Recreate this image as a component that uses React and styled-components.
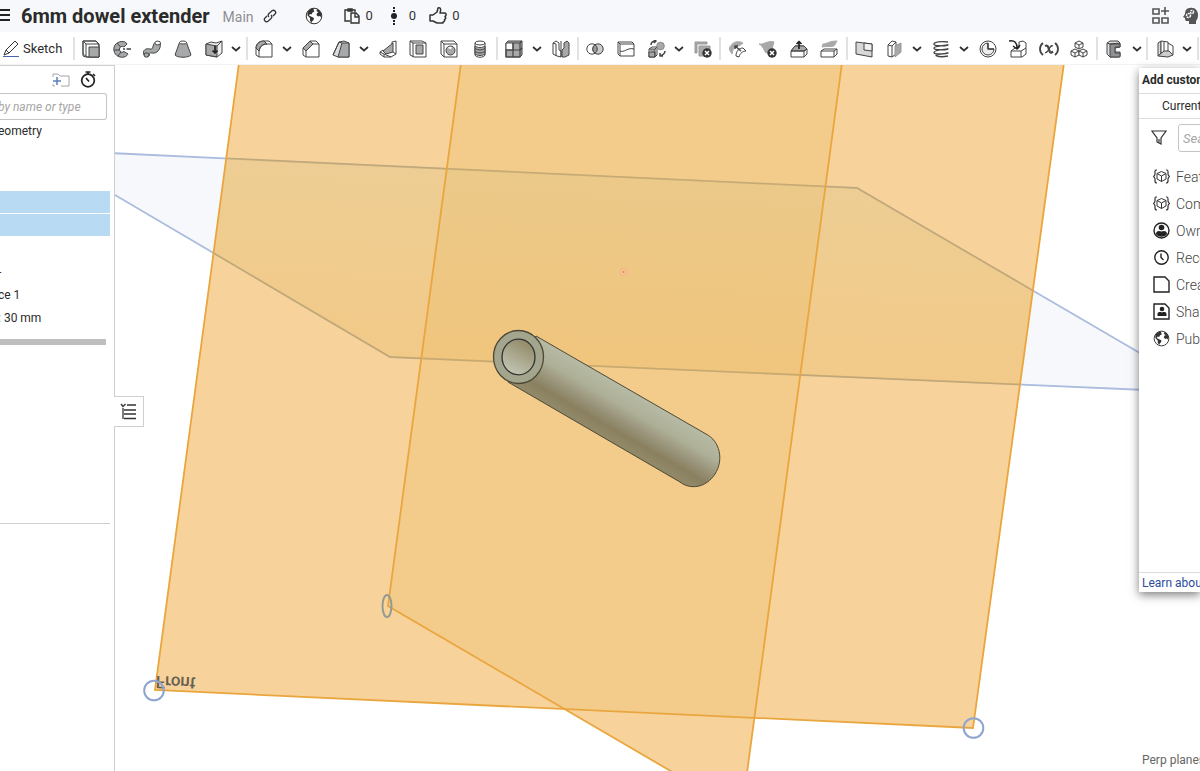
import React from "react";
import styled, { createGlobalStyle } from "styled-components";

const Global = createGlobalStyle`
  *, *::before, *::after { box-sizing: border-box; }
  body {
    margin: 0;
    background: #fff;
    color: #2b2b2b;
    font: 12px/16px Roboto, "Liberation Sans", sans-serif;
    overflow: hidden;
  }
  button, input { font: inherit; color: inherit; }
  svg { flex: none; }
`;

const Page = styled.div`
  display: flex;
  flex-direction: column;
  height: 100vh;
  overflow: hidden;
`;

const Header = styled.header`
  display: flex;
  align-items: center;
  flex: none;
  height: 32px;
  background: #f7f8fb;
`;

const PlainButton = styled.button`
  display: flex;
  align-items: center;
  justify-content: center;
  flex: none;
  padding: 0;
  border: 0;
  background: none;
  cursor: pointer;
`;

const MenuButton = styled(PlainButton)`
  width: 10px;
  margin-right: 11px;
`;

const Title = styled.h1`
  margin: 0;
  font-size: 20px;
  line-height: 30px;
  font-weight: 700;
  white-space: nowrap;
`;

const Branch = styled.span`
  margin: 2px 9px 0 13px;
  font-size: 14px;
  color: #8d8f93;
`;

const Stats = styled.div`
  display: flex;
  align-items: center;
  gap: 17px;
  margin-left: 28px;
`;

const Stat = styled(PlainButton)`
  gap: ${(p) => p.$gap || 6}px;
  margin-left: ${(p) => p.$before || 0}px;
  font-size: 13px;
  color: #333;
`;

const HeaderEnd = styled.div`
  display: flex;
  align-items: center;
  gap: 12px;
  margin-left: auto;
`;

const Toolbar = styled.div`
  display: flex;
  align-items: center;
  flex: none;
  height: 33px;
  border-bottom: 1px solid #f3f3f3;
  background: #fff;
`;

const SketchButton = styled(PlainButton)`
  justify-content: flex-start;
  width: 72px;
  height: 32px;
  gap: 3px;
  padding: 1px 0 0 3px;
  font-size: 13px;
`;

const Tool = styled(PlainButton)`
  flex: 0 1 31px;
  min-width: 0;
  height: 32px;
  padding-top: 1px;
`;

const Arrow = styled(PlainButton)`
  width: 16px;
  height: 32px;
  padding: 1px 1px 0 0;
`;

const Divider = styled.span`
  flex: none;
  width: 2px;
  height: 23px;
  margin: 0 1px;
  background: #e2e2e2;
`;

const Main = styled.main`
  position: relative;
  display: flex;
  flex: 1;
  min-height: 0;
`;

const Side = styled.aside`
  flex: none;
  width: 115px;
  border-top: 1px solid #cfcfcf;
  border-right: 1px solid #cfcfcf;
  background: #fff;
`;

const SideTools = styled.div`
  display: flex;
  align-items: center;
  justify-content: flex-end;
  gap: 10px;
  height: 27px;
  padding-right: 18px;
`;

const FilterInput = styled.input`
  display: block;
  width: 107px;
  height: 27px;
  padding: 0;
  border: 1px solid #c4c4c4;
  border-left: 0;
  border-radius: 0 3px 3px 0;
  outline: 0;
  background: #fff;
  text-indent: -2px;
  &::placeholder { color: #a6a6a6; font-style: italic; opacity: 1; }
`;

const List = styled.ul`
  display: flex;
  flex-direction: column;
  gap: 1px;
  margin: ${(p) => p.$top || 0}px 0 0;
  padding: 0;
  list-style: none;
`;

const Row = styled.li`
  height: 22px;
  width: 110px;
  line-height: 23px;
  text-indent: -2px;
  white-space: nowrap;
  overflow: hidden;
  background: ${(p) => (p.$selected ? "#b8daf2" : "transparent")};
`;

const SplitBar = styled.div`
  width: 106px;
  height: 6px;
  margin-top: 10px;
  background: #bfbfbf;
`;

const Rule = styled.hr`
  width: 110px;
  height: 1px;
  margin: 178px 0 0;
  border: 0;
  background: #cfcfcf;
`;

const Viewport = styled.section`
  position: relative;
  flex: 1;
  min-width: 0;
  overflow: hidden;
`;

const Scene = styled.svg`
  display: block;
  width: 100%;
  height: 100%;
`;

const ListTab = styled(PlainButton)`
  position: absolute;
  left: 114px;
  top: 331px;
  width: 30px;
  height: 31px;
  border: 1px solid #cfcfcf;
  border-left: 0;
  background: #fff;
`;

const Dialog = styled.aside`
  position: absolute;
  top: 3px;
  right: 0;
  display: flex;
  flex-direction: column;
  width: 61px;
  min-height: 524px;
  background: #fff;
  box-shadow: 0 3px 9px rgba(0, 0, 0, 0.5);
  overflow: hidden;
  white-space: nowrap;
`;

const DialogTitle = styled.h2`
  margin: 0;
  padding-left: 3px;
  height: 26px;
  font-size: 12px;
  line-height: 24px;
  font-weight: 700;
  border-bottom: 1px solid #dcdcdc;
`;

const DialogTab = styled(PlainButton)`
  justify-content: flex-start;
  height: 25px;
  padding-left: 23px;
  border-bottom: 1px solid #dcdcdc;
`;

const SearchLine = styled.div`
  display: flex;
  align-items: center;
  gap: 11px;
  padding: 5px 0 0 12px;
`;

const SearchInput = styled.input`
  flex: none;
  width: 160px;
  height: 28px;
  padding: 0 4px;
  border: 1px solid #c4c4c4;
  border-radius: 3px;
  outline: 0;
  font-size: 13px;
  &::placeholder { color: #a6a6a6; font-style: italic; opacity: 1; }
`;

const Sources = styled.ul`
  flex: 1;
  margin: 11px 0 0;
  padding: 0;
  list-style: none;
`;

const Source = styled(PlainButton)`
  justify-content: flex-start;
  gap: 6px;
  height: 27px;
  padding-left: 14px;
  font-size: 14px;
  font-weight: 300;
  color: #444;
`;

const Learn = styled.a`
  height: 20px;
  padding-left: 3px;
  border-top: 1px solid #dcdcdc;
  font-size: 12px;
  line-height: 20px;
  color: #2c4b9c;
  text-decoration: none;
`;

const Status = styled.output`
  position: absolute;
  right: 0;
  bottom: 3px;
  width: 58px;
  overflow: hidden;
  white-space: nowrap;
  color: #666;
`;

const D = "#444";
const G = "#a6a8aa";

const drawings = {
  extrude: (
    <>
      <path d="M1 4V16L4 17H17V5L14 1H4L1 1Z" fill="#fff" />
      <path d="M1 1H14L17 4V17H5L1 14Z M1 1L4 4H17M4 4V16" />
      <path d="M7 7H17V17H7Z" fill={G} />
    </>
  ),
  revolve: (
    <>
      <path d="M14 4C12 0 5 1 2 5C-1 10 2 16 7 17C11 18 14 16 15 14L11 11.500C9 13 7 12 6.500 10C6 7 9 5.500 11 7Z" fill={G} />
      <path d="M14 4L11 7M4 3L7.500 7M1 10H6M5 16L8 12" />
      <path d="M10 9H12M13.500 9H18" strokeWidth="1.300" />
    </>
  ),
  sweep: (
    <>
      <path d="M1 15C-1 10 3 8 7 9C11 10 9 5 12 2.500L17.300 3.500C18 9 14 14 9 13C6 12 7 14 6 16Z" fill={G} />
      <ellipse cx="14.700" cy="3" rx="2.800" ry="1.900" fill="#fff" />
      <ellipse cx="3.500" cy="15" rx="2.500" ry="2.200" fill={G} />
    </>
  ),
  loft: (
    <>
      <path d="M5.500 2.500L1 15C4 18 14 18 17 15L12.500 2.500Z" fill={G} />
      <ellipse cx="9" cy="2.500" rx="3.500" ry="1.500" fill="#fff" />
    </>
  ),
  thicken: (
    <>
      <path d="M1 4L6 2L11 3L17 1V13L12 17L1 15Z" fill="#eee" />
      <path d="M1 4L12 6V17L1 15Z" fill={G} />
      <path d="M12 6L17 1" />
      <path d="M10 6V13M7.500 10.500L10 13L12.500 10.500" stroke="#222" strokeWidth="1.700" />
    </>
  ),
  fillet: (
    <>
      <path d="M1 15V8C1 3 5 1 9 1H14L17 4V17H4Z" fill="#fff" />
      <path d="M1 8C2 3 5 1 9 1L12 4C7 4 5 7 4 11Z" fill={G} />
      <path d="M4 17V11C5 6 8 4 12 4H17" />
    </>
  ),
  chamfer: (
    <>
      <path d="M1 15V8L8 1H14L17 4V17H4Z" fill="#fff" />
      <path d="M1 8L8 1L11 4L4 11Z" fill={G} />
      <path d="M4 17V11L11 4H17" />
    </>
  ),
  draft: (
    <>
      <path d="M1 15L7 2L12 1L17 3V17H6Z" fill="#ddd" />
      <path d="M6 17L10 3H17V17Z" fill={G} />
      <path d="M1 15L7 2L10 3" />
    </>
  ),
  rib: (
    <>
      <path d="M1 12L4 10L6 13L13 10V2L17 1V14L12 17H5L1 14Z" fill="#fff" />
      <path d="M4 11L14 3V12L7 14Z" fill={G} />
      <path d="M1 12L5 14L12 17M5 14V17M14 12L17 14" />
    </>
  ),
  shell: (
    <>
      <path d="M1 1H13L17 3V17H5L1 15Z" fill="#fff" />
      <path d="M7 5H14V14H7Z" fill={G} />
      <path d="M1 1L4 3V17M4 3H17" />
    </>
  ),
  hole: (
    <>
      <path d="M1 1H14L17 4V17H4L1 14Z" fill="#fff" />
      <path d="M1 1L4 4H17M4 4V17" />
      <circle cx="10.500" cy="10.500" r="4.500" fill={G} />
      <path d="M8 8C9 6.500 11 6.500 12 7.500C11 9.500 10 9.500 8 8Z" fill="#fff" stroke="none" />
    </>
  ),
  thread: (
    <>
      <path d="M4 3V15C5 18 13 18 14 15V3Z" fill="#fff" />
      <path d="M4 6C7 8 11 8 14 6V14C11 16 7 16 4 14Z" fill={G} />
      <ellipse cx="9" cy="3" rx="5" ry="2" fill="#fff" />
      <path d="M4 8.500C7 10.500 11 10.500 14 8.500M4 11.500C7 13.500 11 13.500 14 11.500" />
    </>
  ),
  pattern: (
    <>
      <path d="M1 3L3 1H17V15L15 17H1Z" fill={G} />
      <path d="M1 3H8V10H1Z" fill="#fff" />
      <path d="M8 3H15V10H8ZM1 10H8V17H1ZM8 10H15V17H8ZM15 3L17 1M15 10L17 8" strokeWidth="1.200" />
    </>
  ),
  mirror: (
    <>
      <path d="M1 3L4 1L7 3V10L9 11V17L5 16L1 14Z" fill="#fff" />
      <path d="M10 10L12 8V3L15 1L17 3V15L13 17H10Z" fill={G} />
      <path d="M1 3L4 4V16M9 1V17" />
    </>
  ),
  boolean: (
    <>
      <circle cx="6" cy="9" r="5.200" fill="#fff" />
      <circle cx="12" cy="9" r="5.200" fill="#c8c9ca" />
      <path d="M9 4.700A5.200 5.200 0 0 1 9 13.300A5.200 5.200 0 0 1 9 4.700Z" fill="#999" />
    </>
  ),
  split: (
    <>
      <path d="M1 2H15L17 4V16H3L1 14Z" fill="#fff" />
      <path d="M1 2L3 4H17M3 4V16M3 11C7 13 11 7 17 9" />
    </>
  ),
  transform: (
    <>
      <path d="M1 9L4 7H9V15L7 17H1Z" fill="#fff" />
      <path d="M1 9H7V17M7 9L9 7M1 12H7V17H1Z" fill={G} />
      <circle cx="12.500" cy="6" r="3.800" fill={G} stroke="#888" />
      <path d="M3 5C3 2 5 1 8 1M6 0L8 1L6 3M17 11C17 13 15 15 12 16M12 13V16H15" strokeWidth="1.500" />
    </>
  ),
  deletePart: (
    <>
      <path d="M1 2H13V4H3V13H1Z" fill={G} stroke="#999" />
      <path d="M5 6H16V16H5Z" fill={G} stroke="#999" />
      <circle cx="13" cy="13" r="4.700" fill="#333" stroke="none" />
      <path d="M11 11L15 15M15 11L11 15" stroke="#fff" strokeWidth="1.500" />
    </>
  ),
  modifyFillet: (
    <>
      <path d="M0 9C3 2 8 0 14 3L10 6C6 5 4 8 3 14Z" fill={G} stroke={G} />
      <path d="M7 16C7 11 10 8 14 8L17 11C14 11 11 13 10 17Z" fill="#fff" />
      <path d="M12 11L6 6M6 9V6H9" strokeWidth="1.500" />
    </>
  ),
  deleteFace: (
    <>
      <path d="M0 4C5 5 9 0 15 2L13 9L7 13C5 11 5 7 0 4Z" fill={G} stroke={G} />
      <circle cx="13" cy="13" r="4.700" fill="#333" stroke="none" />
      <path d="M11 11L15 15M15 11L11 15" stroke="#fff" strokeWidth="1.500" />
    </>
  ),
  moveFace: (
    <>
      <path d="M1 11L5 6H14L17 9V14L14 17H1Z" fill="#fff" />
      <path d="M1 11L5 6H14L17 9L14 11Z" fill={G} />
      <path d="M1 11H14V17M14 11L17 9" />
      <path d="M9 9V2M6.500 4L9 1.500L11.500 4" stroke="#222" strokeWidth="1.700" />
    </>
  ),
  replaceFace: (
    <>
      <path d="M3 4C7 4 9 1 17 1L14 6C9 7 7 6 2 7Z" fill={G} stroke={G} />
      <path d="M1 11L4 9H17V14L14 17H1Z" fill="#fff" />
      <path d="M1 11H14V17M14 11L17 9" />
    </>
  ),
  plane: (
    <>
      <path d="M1 2L17 4V17L1 14Z" fill="#d6d7d8" />
      <path d="M9 3L17 4V11L9 10Z" fill="#f0f0f0" />
    </>
  ),
  offset: (
    <>
      <path d="M2 5L6 1L10 2V14L6 17L2 16Z" fill="#fff" />
      <path d="M9 6L15 3V12L9 17Z" fill={G} stroke="#999" />
      <path d="M2 5L6 6L10 2M6 6V17" />
    </>
  ),
  helix: (
    <path d="M16 2C9 1 2 2 2 4C2 6 11 6.500 16 5C11 5.500 2 6 2 8C2 10 11 10.500 16 9C11 9.500 2 10 2 12.500C2 14.500 11 14.500 16 13C12 14 4 14 4 15.500C7 17 12 17 16 16" strokeWidth="1.400" />
  ),
  importPart: (
    <>
      <circle cx="9" cy="9" r="8" fill="#fff" />
      <path d="M9 3A6 6 0 1 0 15 9H9Z" fill="#ededed" />
      <path d="M9 3V9H15" strokeWidth="1.500" />
    </>
  ),
  derived: (
    <>
      <path d="M2 11L6 8H10V2L14 1L17 3V14L13 17H2Z" fill="#fff" />
      <path d="M2 11H12L17 8M12 11V17" />
      <path d="M0 1C6 0 8 3 8 8M4 6L8 9L11 5" stroke="#222" strokeWidth="1.500" />
    </>
  ),
  assembly: (
    <>
      <path d="M9 1L13 3V7L9 9L5 7V3ZM5 3L9 5L13 3M9 5V9" fill="#fff" />
      <path d="M5 9L9 11V15L5 17L1 15V11ZM1 11L5 13L9 11M5 13V17" fill="#fff" />
      <path d="M13 9L17 11V15L13 17L9 15V11ZM9 11L13 13L17 11M13 13V17" fill="#fff" />
    </>
  ),
  frame: (
    <>
      <path d="M2 3L5 1H13L15 3V7L10 8V12H15V16L14 17H5L2 14Z" fill="#ddd" />
      <path d="M5 4H15V7H10V13H15V17H5Z" fill="#8f9295" />
      <path d="M2 3L5 4L15 3" />
    </>
  ),
  sheet: (
    <>
      <path d="M2 3L5 1V13L2 16Z" fill="#ddd" />
      <path d="M5 1L12 2V11L5 13Z" fill="#fff" />
      <path d="M2 16L8 11H13L17 15L12 17Z" fill="#ccc" />
      <path d="M12 3L17 6V15M8 2V11" />
    </>
  ),
};

const Icon = ({ name }) => (
  <svg width="18" height="18" viewBox="0 0 18 18" fill="none" stroke={D} strokeWidth="1" strokeLinejoin="round" aria-hidden="true">
    {drawings[name]}
  </svg>
);

const VariableIcon = () => (
  <svg width="20" height="18" viewBox="0 0 20 18" fill="none" stroke={D} strokeWidth="1.800" aria-hidden="true">
    <path d="M4 3C0 6 0 12 4 15M16 3C20 6 20 12 16 15" />
    <path d="M6 6C8 5 9 6 9.500 8L10.500 11C11 13 12 13 14 11.500" strokeWidth="2.200" />
    <path d="M14 6C12 5 11 7 10 9C9 11 8 13 6 12.500" strokeWidth="1.300" />
  </svg>
);

const Chevron = () => (
  <svg width="10" height="6" viewBox="0 0 10 6" fill="none" stroke="#333" strokeWidth="1.800" aria-hidden="true">
    <path d="M1 1L5 4.500L9 1" />
  </svg>
);

const Globe = ({ size }) => (
  <svg width={size} height={size} viewBox="0 0 18 18" aria-hidden="true">
    <circle cx="9" cy="9" r="7.800" fill="#fff" stroke="#333" strokeWidth="1" />
    <path d="M2.500 5C4 2.500 6.500 1.500 9 1.500L8.500 3L9.500 4.500L7.500 5.500L6.500 7.500L5 7L4 8.500L6 9.500L9 11L8.500 13L7 14.500L6.500 16L5 13.500V11L2.500 8.500ZM12 2L14.500 3.500L16.500 7L16 10L14.500 9L13 9.500L11.500 8L12 6L13.500 5.500L11.500 4Z" fill="#333" />
  </svg>
);

const toolbar = [
  "extrude", "revolve", "sweep", "loft", "thicken", ">", "|",
  "fillet", ">", "chamfer", "draft", ">", "rib", "shell", "hole", "thread", "|",
  "pattern", ">", "mirror", "|",
  "boolean", "split", "transform", ">", "deletePart", "|",
  "modifyFillet", "deleteFace", "moveFace", "replaceFace", "|",
  "plane", "offset", ">", "helix", ">", "importPart", "derived", "variable", "assembly", "|",
  "frame", ">", "|", "sheet", ">", "|",
];

const ToolbarItem = ({ item }) => {
  if (item === "|") return <Divider />;
  if (item === ">") return <Arrow aria-label="More tools"><Chevron /></Arrow>;
  return (
    <Tool aria-label={item}>
      {item === "variable" ? <VariableIcon /> : <Icon name={item} />}
    </Tool>
  );
};

const CubeBraces = () => (
  <svg width="17" height="17" viewBox="0 0 17 17" fill="none" stroke="#333" strokeWidth="1" aria-hidden="true">
    <path d="M4 2H3Q2 2 2 4V6Q2 8 0 8.500Q2 9 2 11V13Q2 15 4 15M13 2H14Q15 2 15 4V6Q15 8 17 8.500Q15 9 15 11V13Q15 15 13 15" strokeWidth="1.200" />
    <path d="M8.500 3.500L13 5.500V11L8.500 13.500L4 11V5.500ZM4 5.500L8.500 8L13 5.500M8.500 8V13.500" />
  </svg>
);

const OwnerIcon = () => (
  <svg width="17" height="17" viewBox="0 0 17 17" aria-hidden="true">
    <circle cx="8.500" cy="8.500" r="7.500" fill="#fff" stroke="#222" strokeWidth="1.400" />
    <circle cx="8.500" cy="5.500" r="2.800" fill="#222" />
    <path d="M3 12C3 8.500 6 8.500 8.500 9.500C11 8.500 14 8.500 14 12C12 15.500 5 15.500 3 12Z" fill="#222" />
  </svg>
);

const ClockIcon = () => (
  <svg width="17" height="17" viewBox="0 0 17 17" fill="none" stroke="#222" strokeWidth="1.400" aria-hidden="true">
    <circle cx="8.500" cy="8.500" r="6.700" />
    <path d="M8 4.500V8.500L10.500 11" />
  </svg>
);

const PageIcon = ({ person }) => (
  <svg width="17" height="17" viewBox="0 0 17 17" fill="none" stroke="#222" strokeWidth="1.400" aria-hidden="true">
    <path d="M1 1H12L16 5V16H1Z" />
    {person && (
      <g fill="#222" stroke="none">
        <circle cx="9" cy="6" r="2.300" />
        <path d="M4.500 13V11C4.500 9 7 8.500 9 9.500C11 8.500 13.500 9 13.500 11V13Z" />
      </g>
    )}
  </svg>
);

const sources = [
  [<CubeBraces />, "Feature"],
  [<CubeBraces />, "Company"],
  [<OwnerIcon />, "Owned"],
  [<ClockIcon />, "Recent"],
  [<PageIcon />, "Created"],
  [<PageIcon person />, "Shared"],
  [<Globe size={17} />, "Public"],
];

const Model = () => (
  <Scene viewBox="115 65 1085 706" preserveAspectRatio="xMinYMin slice" role="img" aria-label="Tube model with reference planes">
    <defs>
      <linearGradient id="tube" gradientUnits="userSpaceOnUse" x1="622" y1="385" x2="596" y2="430">
        <stop offset="0" stopColor="#b7bba5" />
        <stop offset=".35" stopColor="#aeaf97" />
        <stop offset=".6" stopColor="#99947a" />
        <stop offset=".82" stopColor="#8a8060" />
        <stop offset="1" stopColor="#908866" />
      </linearGradient>
      <linearGradient id="bore" x1=".75" y1=".1" x2=".35" y2=".9">
        <stop offset="0" stopColor="#958c6b" />
        <stop offset="1" stopColor="#bdc0ac" />
      </linearGradient>
      <linearGradient id="shade" x1=".6" y1="0" x2=".4" y2="1">
        <stop offset="0" stopColor="#e2cb90" stopOpacity=".4" />
        <stop offset="1" stopColor="#f2bd66" stopOpacity=".35" />
      </linearGradient>
      <clipPath id="front"><path d="M239 65L155 690L973 728L1064 65Z" /></clipPath>
    </defs>
    <g>
      <path d="M110 153L857 188L1145 356V390L390 357L110 192Z" fill="#f7f8fb" stroke="#abbcde" strokeWidth="1.800" />
      <path d="M565 709L671 771H747L754 718Z" fill="#f7d39b" />
      <path d="M239 65L155 690L973 728L1064 65Z" fill="#efa737" fillOpacity=".5" />
      <g clipPath="url(#front)">
        <path d="M461 65L388 606L671 771H747L842 65Z" fill="#ecbd6b" fillOpacity=".35" />
        <path d="M110 153L857 188L1145 356V390L390 357L110 192Z" fill="url(#shade)" stroke="#a08e5c" strokeOpacity=".35" strokeWidth="1.500" />
      </g>
      <g fill="none" stroke="#eaa63e" strokeWidth="1.800">
        <path d="M239 63L155 690L973 728L1064 63" />
        <path d="M461 63L388 606L674 773M747 773L842 63" />
      </g>
    </g>
    <g stroke="#4d4937" strokeWidth="1">
      <path d="M536 336L706 434C720 441 724 460 715 474C706 488 690 490 680 482L508 382Z" fill="url(#tube)" />
      <ellipse cx="518.500" cy="357" rx="25" ry="26.500" fill="#a3a58c" strokeWidth="1.300" />
      <ellipse cx="518.500" cy="357" rx="16.500" ry="17.800" fill="url(#bore)" stroke="#333" strokeWidth="1.300" />
    </g>
    <circle cx="623.500" cy="272" r="3.500" fill="#f5c48c" stroke="#f4b48c" />
    <circle cx="623.500" cy="272" r="1" fill="#ee7b62" />
    <text transform="translate(156 676) rotate(2) scale(1 -1)" fontSize="17" fontWeight="500" fill="#67604f" fontFamily="Roboto, sans-serif">Front</text>
    <g fill="none" stroke="#8fa4cf" strokeWidth="2">
      <circle cx="154" cy="690.500" r="9.800" />
      <circle cx="973.500" cy="728" r="9.800" />
      <ellipse cx="387" cy="606" rx="4.500" ry="11" stroke="#929b91" />
    </g>
  </Scene>
);

export default function App() {
  return (
    <Page>
      <Global />
      <Header>
        <MenuButton aria-label="Menu">
          <svg width="10" height="14" viewBox="0 0 10 14" fill="#222"><path d="M0 0H10V2H0ZM0 5H10V7H0ZM0 10H10V12H0Z" /></svg>
        </MenuButton>
        <Title>6mm dowel extender</Title>
        <Branch>Main</Branch>
        <PlainButton aria-label="Copy link">
          <svg width="14" height="14" viewBox="0 0 14 14" fill="none" stroke="#333" strokeWidth="1.300">
            <path d="M6 8C4.500 6.500 5 5.500 6 4.500L9 1.800C10 1 11 1 12 2C13 3 13 4 12 5L10 7" />
            <path d="M8 6C9.500 7.500 9 8.500 8 9.500L5 12.200C4 13 3 13 2 12C1 11 1 10 2 9L4 7" />
          </svg>
        </PlainButton>
        <Stats>
          <PlainButton aria-label="Public document"><Globe size={18} /></PlainButton>
          <Stat $before={4}>
            <svg width="16" height="16" viewBox="0 0 16 16" fill="none" stroke="#333" strokeWidth="1.400">
              <path d="M6 13H1V2H11V4M4 1H8V3H4Z" />
              <path d="M7 5H12L15 8V15H7ZM11 5V9H15" />
            </svg>
            0
          </Stat>
          <Stat $gap={12} $before={1}>
            <svg width="6" height="18" viewBox="0 0 6 18" fill="#222">
              <path d="M2 0H4V2H2ZM2 3H4V5H2ZM2 13H4V15H2ZM2 16H4V18H2Z" />
              <circle cx="3" cy="9" r="3" />
            </svg>
            0
          </Stat>
          <Stat $gap={5} $before={-4}>
            <svg width="18" height="18" viewBox="0 0 18 18" fill="none" stroke="#333" strokeWidth="1.500" strokeLinejoin="round">
              <path d="M1 8H4L8 5L9 1C12 0 12 3 11 6H16C18 7 17 9 16 9.500C17 11 17 12 15.500 12.500C16 14 15 15 14 15V16H8L4 14H1Z" />
            </svg>
            0
          </Stat>
        </Stats>
        <HeaderEnd>
          <PlainButton aria-label="Apps">
            <svg width="18" height="18" viewBox="0 0 18 18" fill="none" stroke="#555" strokeWidth="1.600">
              <path d="M1 2H7V7H1ZM1 11H7V16H1ZM10 11H16V16H10ZM13 0V8M9 4H17" />
            </svg>
          </PlainButton>
          <PlainButton aria-label="Learning">
            <svg width="18" height="18" viewBox="0 0 18 18">
              <path d="M8 1C13 0 16 4 16 8C16 11 15 13 14 14V17H7L7 14H4C3 13 3 12 3 11L1 10L3 7C3 3 5 1 8 1Z" fill="#555" />
              <circle cx="6.500" cy="8.500" r="2" fill="none" stroke="#f7f8fb" strokeWidth="1.500" strokeDasharray="2 .6" />
              <circle cx="10" cy="5" r="1.600" fill="none" stroke="#f7f8fb" strokeWidth="1.400" strokeDasharray="2 .6" />
            </svg>
          </PlainButton>
        </HeaderEnd>
      </Header>

      <Toolbar>
        <SketchButton>
          <svg width="17" height="18" viewBox="0 0 17 18" fill="none" stroke="#333" strokeWidth="1">
            <path d="M0 16.500H16" stroke="#4b62b0" />
            <path d="M1 15L3 10L12 1L15 4L6 13ZM3 10L6 13" fill="#fff" />
          </svg>
          Sketch
        </SketchButton>
        <Divider />
        {toolbar.map((item, i) => <ToolbarItem key={i} item={item} />)}
      </Toolbar>

      <Main>
        <Side>
          <SideTools>
            <PlainButton aria-label="Add folder">
              <svg width="18" height="14" viewBox="0 0 18 14" fill="none">
                <path d="M1 4V1H6L8 3H17V13H9M1 11V13H3" stroke="#a2a7ad" />
                <path d="M5 4V12M1 8H9" stroke="#5d7fc0" strokeWidth="1.500" />
              </svg>
            </PlainButton>
            <PlainButton aria-label="Regeneration times">
              <svg width="16" height="17" viewBox="0 0 16 17" fill="none" stroke="#222" strokeWidth="1.700">
                <circle cx="8" cy="9.500" r="6.300" />
                <path d="M5.500 1H10.500M8 1V3M13 3L15 5M6 7L9 10.500" />
              </svg>
            </PlainButton>
          </SideTools>
          <FilterInput aria-label="Filter" placeholder="by name or type" />
          <List>
            <Row>eometry</Row>
          </List>
          <List $top={3}>
            <Row />
            <Row />
            <Row $selected />
            <Row $selected />
          </List>
          <List $top={2}>
            <Row />
            <Row>-</Row>
            <Row>ce 1</Row>
            <Row>: 30 mm</Row>
          </List>
          <SplitBar />
          <Rule />
        </Side>
        <Viewport>
          <Model />
          <Status>Perp planes</Status>
        </Viewport>
        <ListTab aria-label="Feature list">
          <svg width="17" height="17" viewBox="0 0 17 17" fill="none" stroke="#333" strokeWidth="1.300">
            <path d="M1 1L3 3.500L5.500 1M3 5V16M7 2H16M4 7H16M4 11H16M4 15.500H16" />
          </svg>
        </ListTab>
        <Dialog aria-label="Add custom features">
          <DialogTitle>Add custom</DialogTitle>
          <DialogTab>Current</DialogTab>
          <SearchLine>
            <svg width="16" height="16" viewBox="0 0 16 16" fill="none" stroke="#333" strokeWidth="1.200">
              <path d="M1 1H15L10 8V14L6 12V8ZM8 9V13" />
            </svg>
            <SearchInput aria-label="Search" placeholder="Search" />
          </SearchLine>
          <Sources>
            {sources.map(([icon, label]) => (
              <li key={label}><Source>{icon}{label}</Source></li>
            ))}
          </Sources>
          <Learn href="#learn">Learn about</Learn>
        </Dialog>
      </Main>
    </Page>
  );
}
